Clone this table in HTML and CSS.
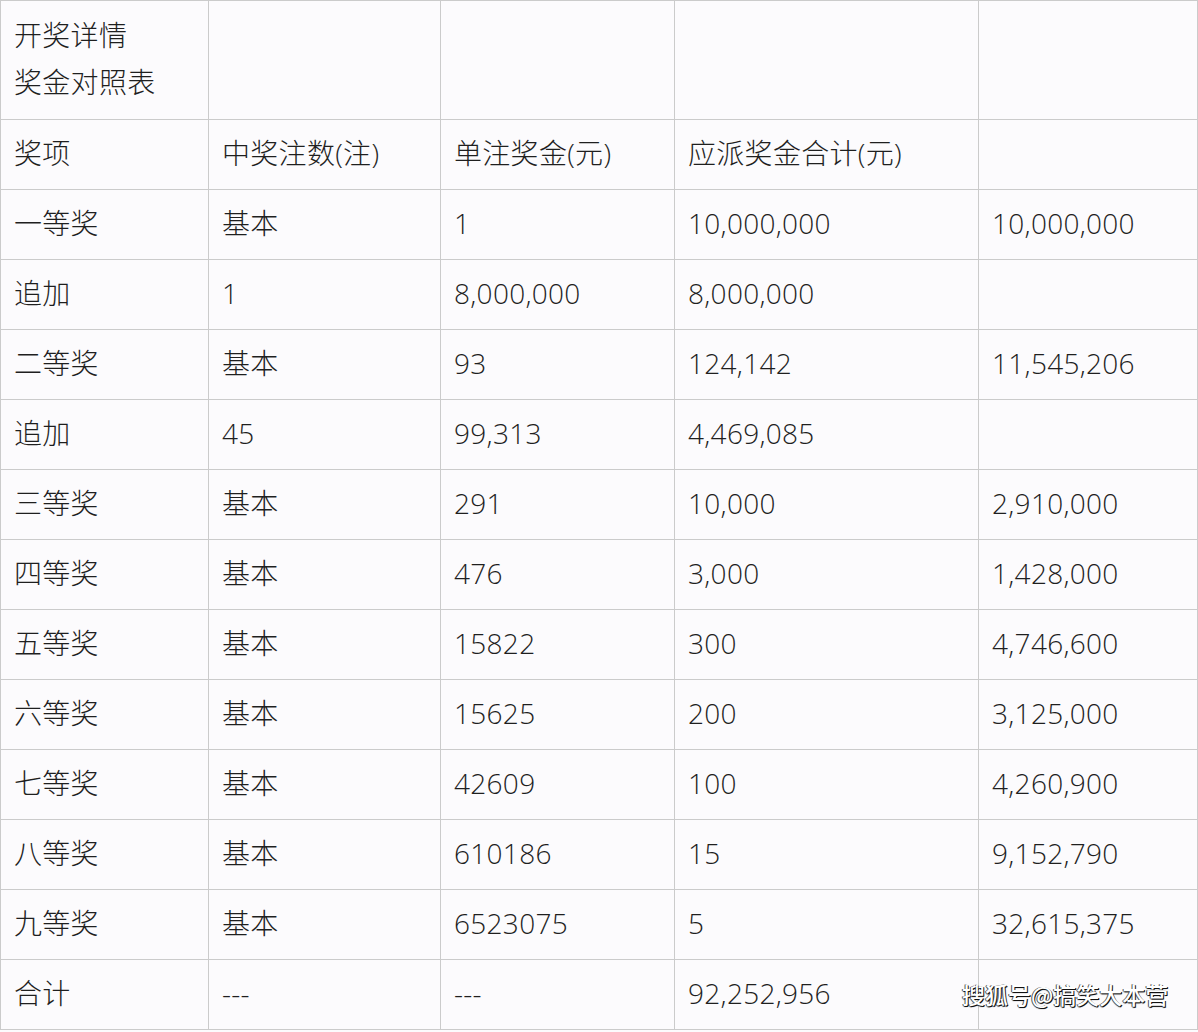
FILE: index.html
```html
<!DOCTYPE html>
<html lang="zh-CN">
<head>
<meta charset="utf-8">
<title>开奖详情</title>
<link rel="stylesheet" href="styles.css">
</head>
<body>
<div class="wrap">
<table class="prize">
<colgroup>
<col class="c1"><col class="c2"><col class="c3"><col class="c4"><col class="c5">
</colgroup>
<tbody>
<tr class="head"><td><div>开奖详情</div><div>奖金对照表</div></td><td></td><td></td><td></td><td></td></tr>
<tr><td>奖项</td><td>中奖注数(注)</td><td>单注奖金(元)</td><td>应派奖金合计(元)</td><td></td></tr>
<tr><td>一等奖</td><td>基本</td><td>1</td><td>10,000,000</td><td>10,000,000</td></tr>
<tr><td>追加</td><td>1</td><td>8,000,000</td><td>8,000,000</td><td></td></tr>
<tr><td>二等奖</td><td>基本</td><td>93</td><td>124,142</td><td>11,545,206</td></tr>
<tr><td>追加</td><td>45</td><td>99,313</td><td>4,469,085</td><td></td></tr>
<tr><td>三等奖</td><td>基本</td><td>291</td><td>10,000</td><td>2,910,000</td></tr>
<tr><td>四等奖</td><td>基本</td><td>476</td><td>3,000</td><td>1,428,000</td></tr>
<tr><td>五等奖</td><td>基本</td><td>15822</td><td>300</td><td>4,746,600</td></tr>
<tr><td>六等奖</td><td>基本</td><td>15625</td><td>200</td><td>3,125,000</td></tr>
<tr><td>七等奖</td><td>基本</td><td>42609</td><td>100</td><td>4,260,900</td></tr>
<tr><td>八等奖</td><td>基本</td><td>610186</td><td>15</td><td>9,152,790</td></tr>
<tr><td>九等奖</td><td>基本</td><td>6523075</td><td>5</td><td>32,615,375</td></tr>
<tr><td>合计</td><td>---</td><td>---</td><td>92,252,956</td><td></td></tr>
</tbody>
</table>
<div class="watermark">搜狐号@搞笑大本营</div>
</div>
</body>
</html>
```
FILE: styles.css
```css
html, body {
  margin: 0;
  padding: 0;
  background: #fcfbfd;
}
.wrap {
  position: relative;
  width: 1198px;
  height: 1032px;
}
.prize {
  border-collapse: collapse;
  table-layout: fixed;
  width: 1197px;
  font-family: "Open Sans", "Noto Sans CJK SC", sans-serif;
  font-size: 28px;
  font-weight: 300;
  color: #1f1f1f;
  letter-spacing: 0.3px;
}
.c1 { width: 208px; }
.c2 { width: 232px; }
.c3 { width: 234px; }
.c4 { width: 304px; }
.c5 { width: 219px; }
.prize td {
  border: 1px solid #cbcbcb;
  height: 66px;
  padding: 0 0 3px 13px;
  vertical-align: middle;
  white-space: nowrap;
  line-height: 1;
}
.prize tr.head td {
  height: 116px;
  padding-bottom: 2px;
  line-height: 47px;
}
.watermark {
  position: absolute;
  left: 962px;
  top: 979px;
  font-family: "Noto Sans CJK SC", sans-serif;
  font-size: 23px;
  font-weight: 500;
  color: #fff;
  line-height: 30px;
  text-shadow: 1px 1px 0 #111, -1px 0 0 #555, 0 1px 1px #333;
}
```
